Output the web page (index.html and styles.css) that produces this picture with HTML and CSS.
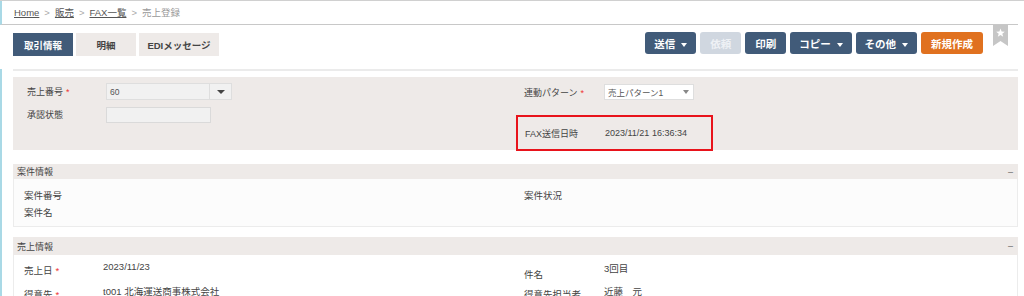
FILE: index.html
```html
<!DOCTYPE html>
<html lang="ja">
<head>
    <meta charset="UTF-8">
    <title>売上登録</title>
    <link rel="stylesheet" href="styles.css">
</head>
<body>
    <div class="breadcrumb">
        <a href="#">Home</a><span class="sep">&gt;</span><a href="#">販売</a><span class="sep">&gt;</span><a href="#">FAX一覧</a><span class="sep">&gt;</span><span class="current">売上登録</span>
    </div>

    <div class="toolbar">
        <div class="tabs">
            <button class="tab active">取引情報</button>
            <button class="tab">明細</button>
            <button class="tab">EDIメッセージ</button>
        </div>
        <div class="actions">
            <button class="btn dropdown">送信 <span class="caret"></span></button>
            <button class="btn disabled">依頼</button>
            <button class="btn">印刷</button>
            <button class="btn dropdown">コピー <span class="caret"></span></button>
            <button class="btn dropdown">その他 <span class="caret"></span></button>
            <button class="btn orange">新規作成</button>
            <span class="bookmark">
                <svg width="15" height="21" viewBox="0 0 15 21"><path d="M0 0H15V21L7.5 16L0 21Z" fill="#c6c6c6"/><path d="M7.5 3.5L8.6 6.6L11.8 6.7L9.3 8.7L10.2 11.8L7.5 10L4.8 11.8L5.7 8.7L3.2 6.7L6.4 6.6Z" fill="#fff"/></svg>
            </span>
        </div>
    </div>

    <div class="main">
        <div class="rule"></div>

        <div class="panel">
            <div class="col left">
                <div class="row">
                    <span class="label">売上番号<span class="req">*</span></span>
                    <span class="select grey"><span class="val">60</span><span class="arrow"></span></span>
                </div>
                <div class="row">
                    <span class="label">承認状態</span>
                    <span class="input"></span>
                </div>
            </div>
            <div class="col right">
                <div class="row">
                    <span class="label">連動パターン<span class="req">*</span></span>
                    <span class="select white"><span class="val">売上パターン1</span><span class="arrow small"></span></span>
                </div>
                <div class="highlight">
                    <span class="label">FAX送信日時</span>
                    <span class="value">2023/11/21 16:36:34</span>
                </div>
            </div>
        </div>

        <div class="section">
            <div class="section-head"><span>案件情報</span><span class="toggle">–</span></div>
            <div class="section-body case">
                <div class="col">
                    <div class="line"><span class="label">案件番号</span></div>
                    <div class="line"><span class="label">案件名</span></div>
                </div>
                <div class="col">
                    <div class="line"><span class="label">案件状況</span></div>
                </div>
            </div>
        </div>

        <div class="section">
            <div class="section-head tall"><span>売上情報</span><span class="toggle">–</span></div>
            <div class="section-body sales">
                <div class="col">
                    <div class="line tall"><span class="label">売上日<span class="req">*</span></span><span class="value">2023/11/23</span></div>
                    <div class="line tall"><span class="label mid">得意先<span class="req">*</span></span><span class="value">t001 北海運送商事株式会社</span></div>
                </div>
                <div class="col">
                    <div class="line tall"><span class="label low">件名</span><span class="value">3回目</span></div>
                    <div class="line tall"><span class="label mid">得意先担当者</span><span class="value">近藤　元</span></div>
                </div>
            </div>
        </div>
    </div>
</body>
</html>
```

FILE: styles.css
```css
body {
    margin: 0;
    font-family: "Liberation Sans", "Noto Sans CJK JP", sans-serif;
    font-size: 9px;
    color: #333;
    background: #fff;
    border-top: 1px solid #d0d0d0;
    overflow: hidden;
}
.breadcrumb {
    height: 23px;
    line-height: 23px;
    padding-left: 12px;
    border-left: 2px solid #a9d9e6;
    border-bottom: 1px solid #c8c8c8;
    margin-right: 6px;
    font-size: 9.5px;
    color: #999;
}
.breadcrumb a {
    color: #555;
    text-decoration: underline;
}
.breadcrumb .sep {
    margin: 0 5px;
    color: #aaa;
}
.toolbar {
    display: flex;
    justify-content: space-between;
    align-items: flex-start;
    padding: 7px 16px 0 13px;
    height: 44px;
    box-sizing: border-box;
}
.tabs {
    display: flex;
    gap: 3px;
    margin-top: 1px;
}
.tab {
    border: none;
    background: #eeeae8;
    color: #444;
    font-family: inherit;
    font-weight: bold;
    font-size: 9.5px;
    height: 23px;
    padding: 0;
    width: 60px;
}
.tab:last-child {
    width: 80px;
}
.tab.active {
    background: #415b79;
    color: #fff;
}
.actions {
    display: flex;
    gap: 4px;
    align-items: flex-start;
}
.btn {
    border: none;
    border-radius: 3px;
    background: #415b79;
    color: #fff;
    font-family: inherit;
    font-weight: bold;
    font-size: 10.5px;
    height: 22px;
    padding: 0 10px;
    white-space: nowrap;
}
.btn.dropdown {
    padding: 0 9px;
}
.btn.disabled {
    background: #d0d7e0;
    color: #eef1f5;
}
.btn.orange {
    background: #e0711f;
}
.caret {
    display: inline-block;
    width: 0;
    height: 0;
    margin-left: 3px;
    vertical-align: middle;
    border-left: 3px solid transparent;
    border-right: 3px solid transparent;
    border-top: 4px solid #fff;
}
.bookmark {
    margin: -7px 0 0 6px;
    line-height: 0;
}
.main {
    border-left: 2px solid #a9d9e6;
    padding: 0 6px 0 11px;
}
.rule {
    height: 2px;
    background: #ebebeb;
    margin-bottom: 6px;
}
.panel {
    display: flex;
    background: #eeeae8;
    height: 73px;
}
.col.left {
    width: 503px;
    flex-shrink: 0;
    padding: 6px 0 0 14px;
    box-sizing: border-box;
}
.col.right {
    padding-top: 7px;
}
.row {
    display: flex;
    align-items: center;
    height: 17px;
    margin-bottom: 6px;
}
.col.right .row {
    padding-left: 8px;
    height: 16px;
    margin-bottom: 15px;
}
.label {
    width: 79px;
    flex-shrink: 0;
    color: #444;
}
.col.right .label {
    width: 80px;
}
.req {
    color: #e33;
    margin-left: 3px;
}
.select {
    display: flex;
    align-items: center;
    height: 17px;
    box-sizing: border-box;
    border: 1px solid #dedede;
}
.select.grey {
    width: 126px;
    background: #f1f1f1;
}
.select.white {
    width: 90px;
    height: 16px;
    background: #fff;
}
.select .val {
    flex: 1;
    padding-left: 3px;
    font-size: 8.5px;
    color: #555;
}
.select .arrow {
    width: 21px;
    height: 100%;
    border-left: 1px solid #dedede;
    display: flex;
    align-items: center;
    justify-content: center;
}
.select .arrow::after {
    content: "";
    border-left: 4px solid transparent;
    border-right: 4px solid transparent;
    border-top: 4px solid #444;
}
.select .arrow.small {
    border-left: none;
    width: 14px;
}
.select .arrow.small::after {
    border-left-width: 3px;
    border-right-width: 3px;
    border-top: 4px solid #888;
}
.input {
    width: 105px;
    height: 16px;
    box-sizing: border-box;
    background: #f1f1f1;
    border: 1px solid #dadada;
}
.highlight {
    display: flex;
    align-items: center;
    width: 197px;
    height: 36px;
    box-sizing: border-box;
    border: 2px solid #e8131b;
    padding-left: 7px;
}
.highlight .label {
    width: 79px;
}
.value {
    color: #444;
}
.section {
    margin-top: 14px;
}
.section + .section {
    margin-top: 10px;
}
.section-head {
    display: flex;
    justify-content: space-between;
    align-items: center;
    height: 15px;
    background: #eeeae8;
    padding: 0 5px 0 4px;
    color: #444;
}
.section-head.tall {
    height: 18px;
}
.toggle {
    color: #666;
}
.section-body {
    display: flex;
    background: #fcfcfc;
    border: 1px solid #ececec;
    border-top: none;
}
.section-body .col {
    width: 510px;
    flex-shrink: 0;
    box-sizing: border-box;
    padding-left: 10px;
}
.section-body .col + .col {
    width: auto;
    flex: 1;
    padding-left: 0;
}
.section-body.case {
    height: 48px;
    padding-top: 4px;
    box-sizing: border-box;
}
.section-body.case .line {
    height: 17px;
    line-height: 17px;
}
.section-body.sales {
    padding-top: 4px;
    background: #fff;
}
.line {
    display: flex;
}
.line.tall {
    height: 23px;
}
.line .label {
    width: 79px;
    font-size: 9.5px;
    padding-top: 4px;
}
.section-body .col + .col .line .label {
    width: 80px;
}
.line .value {
    font-size: 9.5px;
    padding-top: 2px;
}
.line .label.low {
    padding-top: 8px;
}
.line .label.mid {
    padding-top: 5px;
}
```
